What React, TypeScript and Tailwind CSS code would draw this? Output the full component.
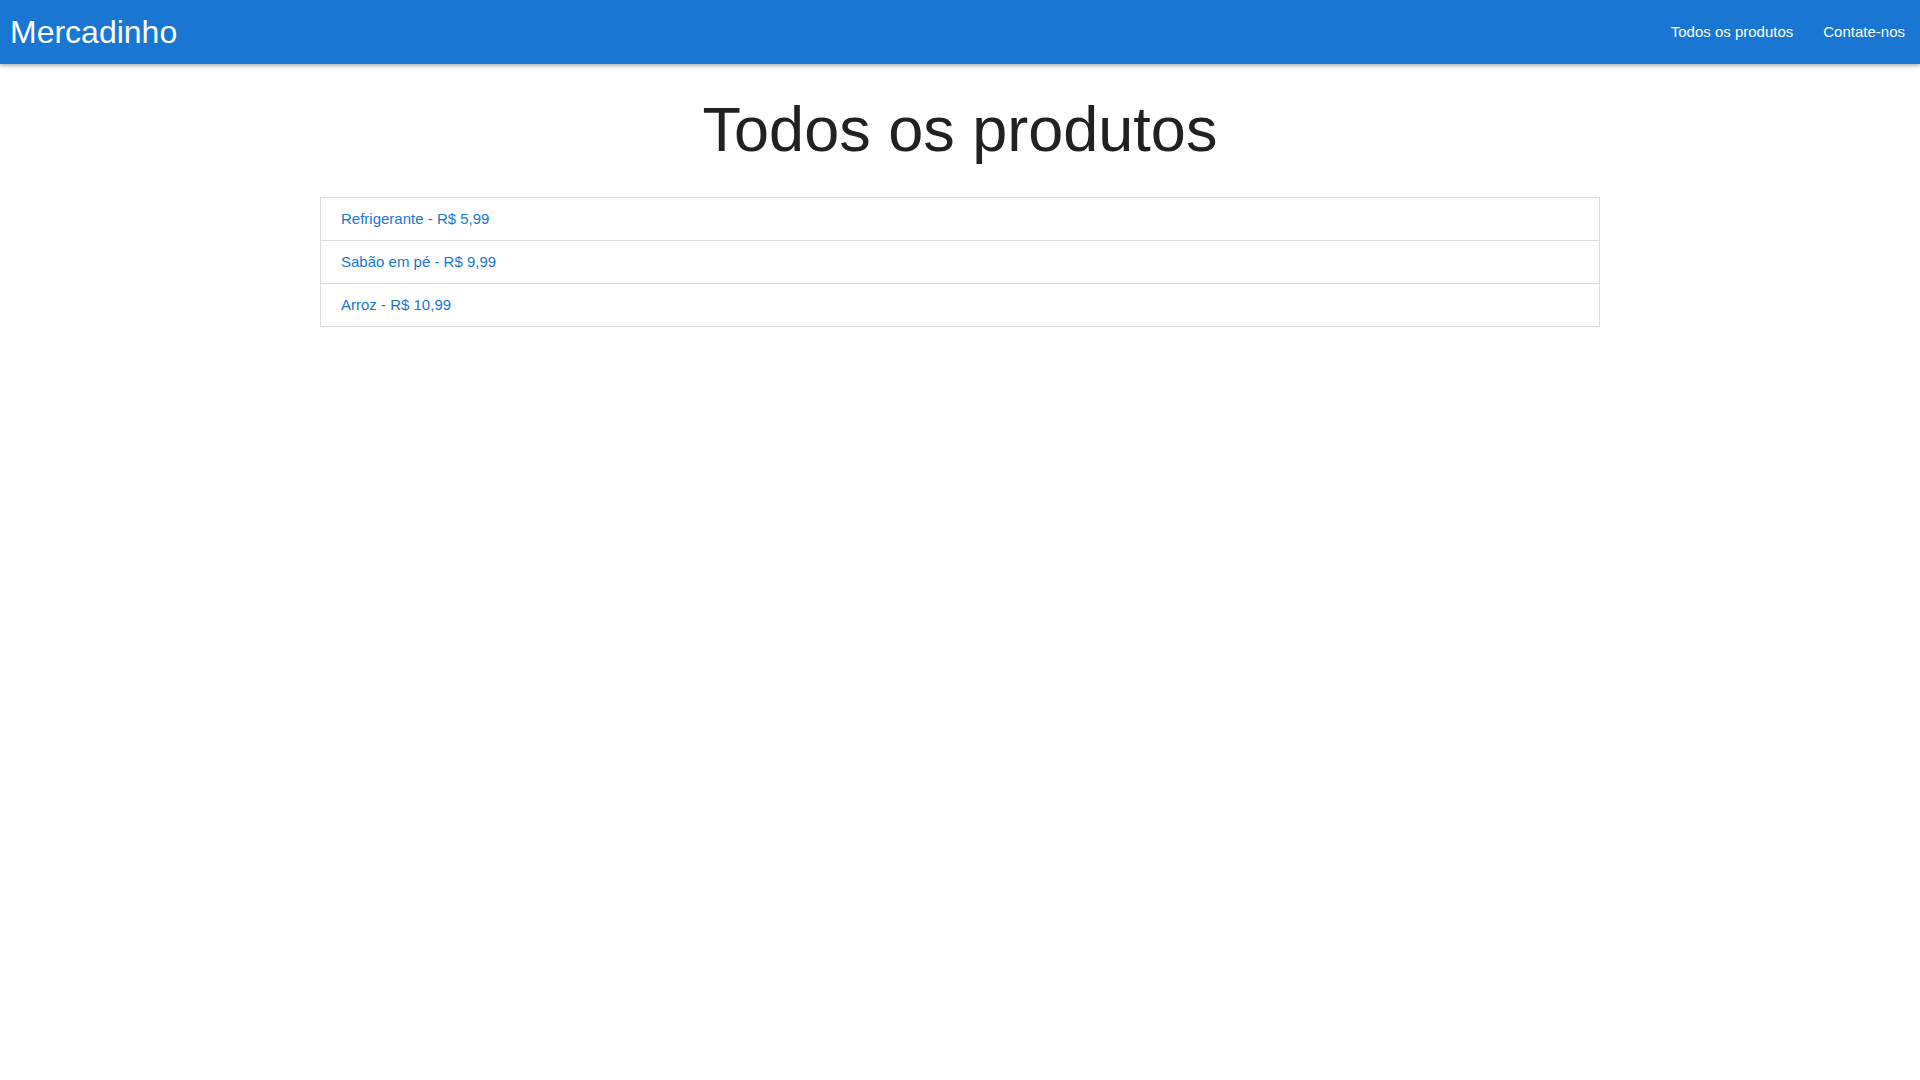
const products = [
  { name: 'Refrigerante', price: '5,99' },
  { name: 'Sabão em pé', price: '9,99' },
  { name: 'Arroz', price: '10,99' },
]

export default function App() {
  return (
    <div className="min-h-screen bg-white font-['Liberation_Sans',Arial,sans-serif]">
      {/* Navbar */}
      <header className="h-16 bg-[#1976d2] flex items-center shadow-[0_2px_4px_rgba(0,0,0,0.3)] relative z-10">
        <a href="#" className="pl-[10px] text-[32px] text-white leading-none">
          Mercadinho
        </a>
        <nav className="ml-auto flex items-center">
          <a href="#" className="px-[15px] text-[15px] text-white">Todos os produtos</a>
          <a href="#" className="px-[15px] text-[15px] text-white">Contate-nos</a>
        </nav>
      </header>

      <main className="w-[1280px] mx-auto">
        <h1 className="mt-[28px] mb-[29px] text-center text-[63px] leading-[1.2] text-[#212121]">
          Todos os produtos
        </h1>
        <ul className="border border-[#dddddd]">
          {products.map((p, i) => (
            <li key={p.name} className={`px-[20px] py-[10px] ${i > 0 ? 'border-t border-[#dddddd]' : ''}`}>
              <a href="#" className="text-[15px] leading-[22px] text-[#1976d2] block">
                {p.name} - R$ {p.price}
              </a>
            </li>
          ))}
        </ul>
      </main>
    </div>
  )
}
